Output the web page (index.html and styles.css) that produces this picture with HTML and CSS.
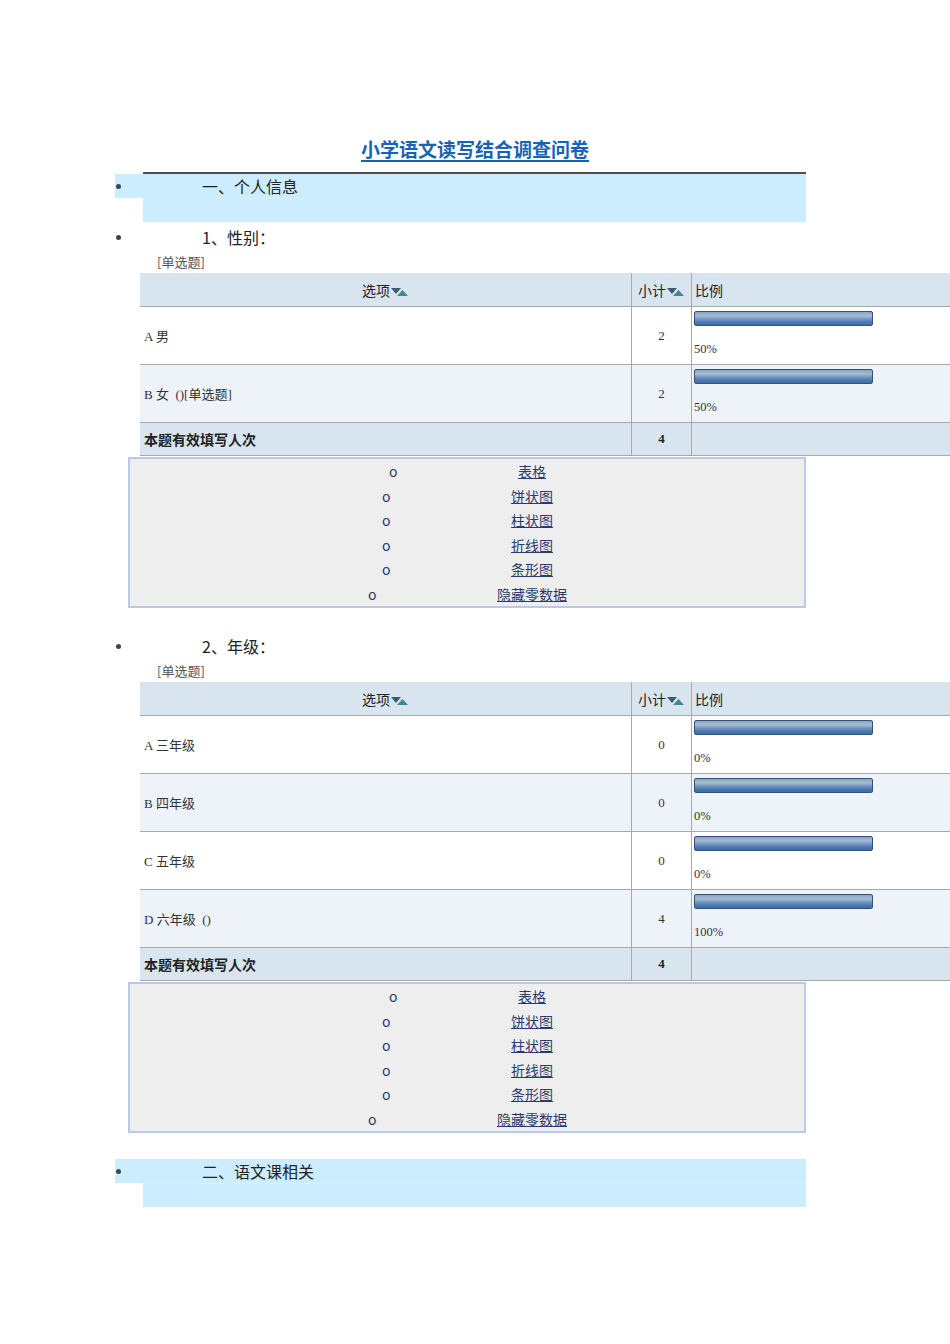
FILE: index.html
```html
<!DOCTYPE html>
<html lang="zh-CN">
<head>
<meta charset="utf-8">
<title>小学语文读写结合调查问卷</title>
<link rel="stylesheet" href="styles.css">
</head>
<body>
<div class="page">
  <h1 class="title"><a href="#">小学语文读写结合调查问卷</a></h1>
  <div class="rule"></div>
  <ul class="items">
    <li class="sec">
      <div class="sec-head"><span class="dot"></span><span class="sec-name">一、个人信息</span></div>
      <div class="sec-band"></div>
    </li>
    <li class="q">
      <div class="q-title"><span class="dot"></span><span class="q-name">1、性别：</span></div>
      <div class="q-type">[单选题]</div>
      <table class="stat">
        <colgroup><col class="w1"><col class="w2"><col class="w3"></colgroup>
        <thead>
          <tr>
            <th class="c1 hc">选项<svg class="sort" width="18" height="10" viewBox="0 0 18 10"><polygon points="0,1 10,1 5,7" fill="#3d5c6e"/><polygon points="6,9 17,9 11.5,3" fill="#3f8696"/></svg></th>
            <th class="c2 hc">小计<svg class="sort" width="18" height="10" viewBox="0 0 18 10"><polygon points="0,1 10,1 5,7" fill="#3d5c6e"/><polygon points="6,9 17,9 11.5,3" fill="#3f8696"/></svg></th>
            <th class="c3 hl">比例</th>
          </tr>
        </thead>
        <tbody>
          <tr>
            <td class="c1 opt">A 男</td>
            <td class="c2 cnt">2</td>
            <td class="c3 ratio"><div class="bar"></div><div class="pct">50%</div></td>
          </tr>
          <tr class="alt">
            <td class="c1 opt">B 女 &nbsp;()[单选题]</td>
            <td class="c2 cnt">2</td>
            <td class="c3 ratio"><div class="bar"></div><div class="pct">50%</div></td>
          </tr>
        </tbody>
        <tfoot>
          <tr>
            <td class="c1 ft-label">本题有效填写人次</td>
            <td class="c2 ft-num">4</td>
            <td class="c3"></td>
          </tr>
        </tfoot>
      </table>
      <ul class="charts">
        <li><span class="mk">o</span><a href="#">表格</a></li>
        <li><span class="mk">o</span><a href="#">饼状图</a></li>
        <li><span class="mk">o</span><a href="#">柱状图</a></li>
        <li><span class="mk">o</span><a href="#">折线图</a></li>
        <li><span class="mk">o</span><a href="#">条形图</a></li>
        <li><span class="mk">o</span><a href="#">隐藏零数据</a></li>
      </ul>
    </li>
    <li class="q">
      <div class="q-title"><span class="dot"></span><span class="q-name">2、年级：</span></div>
      <div class="q-type">[单选题]</div>
      <table class="stat">
        <colgroup><col class="w1"><col class="w2"><col class="w3"></colgroup>
        <thead>
          <tr>
            <th class="c1 hc">选项<svg class="sort" width="18" height="10" viewBox="0 0 18 10"><polygon points="0,1 10,1 5,7" fill="#3d5c6e"/><polygon points="6,9 17,9 11.5,3" fill="#3f8696"/></svg></th>
            <th class="c2 hc">小计<svg class="sort" width="18" height="10" viewBox="0 0 18 10"><polygon points="0,1 10,1 5,7" fill="#3d5c6e"/><polygon points="6,9 17,9 11.5,3" fill="#3f8696"/></svg></th>
            <th class="c3 hl">比例</th>
          </tr>
        </thead>
        <tbody>
          <tr>
            <td class="c1 opt">A 三年级</td>
            <td class="c2 cnt">0</td>
            <td class="c3 ratio"><div class="bar"></div><div class="pct">0%</div></td>
          </tr>
          <tr class="alt">
            <td class="c1 opt">B 四年级</td>
            <td class="c2 cnt">0</td>
            <td class="c3 ratio"><div class="bar"></div><div class="pct">0%</div></td>
          </tr>
          <tr>
            <td class="c1 opt">C 五年级</td>
            <td class="c2 cnt">0</td>
            <td class="c3 ratio"><div class="bar"></div><div class="pct">0%</div></td>
          </tr>
          <tr class="alt">
            <td class="c1 opt">D 六年级 &nbsp;()</td>
            <td class="c2 cnt">4</td>
            <td class="c3 ratio"><div class="bar"></div><div class="pct">100%</div></td>
          </tr>
        </tbody>
        <tfoot>
          <tr>
            <td class="c1 ft-label">本题有效填写人次</td>
            <td class="c2 ft-num">4</td>
            <td class="c3"></td>
          </tr>
        </tfoot>
      </table>
      <ul class="charts">
        <li><span class="mk">o</span><a href="#">表格</a></li>
        <li><span class="mk">o</span><a href="#">饼状图</a></li>
        <li><span class="mk">o</span><a href="#">柱状图</a></li>
        <li><span class="mk">o</span><a href="#">折线图</a></li>
        <li><span class="mk">o</span><a href="#">条形图</a></li>
        <li><span class="mk">o</span><a href="#">隐藏零数据</a></li>
      </ul>
    </li>
    <li class="sec">
      <div class="sec-head"><span class="dot"></span><span class="sec-name">二、语文课相关</span></div>
      <div class="sec-band"></div>
    </li>
  </ul>
</div>
</body>
</html>
```

FILE: styles.css
```css
* { box-sizing: border-box; }
html, body { margin: 0; padding: 0; background: #fff; overflow-x: hidden; }
body {
  width: 950px;
  font-family: "Noto Sans CJK SC", "Noto Sans", sans-serif;
  color: #222;
}
.page { padding: 135px 0 40px; }

.title {
  margin: 0;
  height: 28px;
  line-height: 28px;
  text-align: center;
  font-size: 19px;
  font-weight: 700;
}
.title a {
  color: #1763b3;
  text-decoration: underline;
  text-decoration-thickness: 2px;
  text-underline-offset: 3px;
}
.rule {
  margin: 9px 0 0 143px;
  width: 663px;
  height: 2px;
  background: #4d4f52;
}

.items { list-style: none; margin: 0; padding: 0; }

.dot {
  flex: none;
  width: 5px;
  height: 5px;
  margin-left: 1px;
  border-radius: 50%;
  background: #444;
}

.sec-head {
  margin-left: 115px;
  width: 691px;
  height: 24px;
  display: flex;
  align-items: center;
  background: #ccecff;
}
.sec-name { margin-left: 81px; font-size: 16px; color: #222; }
.sec-band {
  margin: 0 0 3px 143px;
  width: 663px;
  height: 24px;
  background: #ccecff;
  border-top: 1px solid #d8f1ff;
}

.q-title {
  margin-left: 115px;
  height: 24px;
  display: flex;
  align-items: center;
  font-size: 16px;
}
.q-name { margin-left: 81px; color: #222; }
.q-type {
  margin: 4px 0 0 157px;
  line-height: 18px;
  font-size: 13px;
  color: #555;
}

.stat {
  margin: 2px 0 0 140px;
  width: 810px;
  table-layout: fixed;
  border-collapse: separate;
  border-spacing: 0;
  font-family: "Liberation Serif", "Noto Sans CJK SC", serif;
  font-size: 13px;
  color: #333;
}
.stat .w1 { width: 492px; }
.stat .w2 { width: 60px; }
.stat .w3 { width: 258px; }
.stat th, .stat td {
  padding: 0;
  border-bottom: 1px solid #a8a8a8;
}
.stat .c1, .stat .c2 { border-right: 1px solid #a8a8a8; }

.stat thead th {
  height: 34px;
  background: #d9e5ee;
  font-family: "Noto Sans CJK SC", sans-serif;
  font-weight: 400;
  font-size: 14px;
  color: #222;
}
.stat .hc { text-align: center; white-space: nowrap; }
.stat .hl { text-align: left; padding-left: 3px; }
.sort { vertical-align: -1px; margin-left: 1px; }

.stat tbody td { height: 58px; background: #fff; }
.stat tbody tr.alt td { background: #eef3fa; }
.stat .opt { padding-left: 4px; }
.stat .cnt { text-align: center; }
.stat .ratio { vertical-align: top; padding: 4px 0 0 2px; }

.bar {
  width: 179px;
  height: 15px;
  border: 1px solid #2d5480;
  border-radius: 2px;
  background: linear-gradient(#8aa3c0 0%, #a7bdd4 30%, #7d9cc2 50%, #4f7db3 75%, #3f6da3 100%);
}
.pct { margin-top: 14px; line-height: 18px; font-size: 12.5px; color: #333; }

.stat tfoot td { height: 33px; background: #d9e5ee; }
.stat .ft-label {
  padding-left: 4px;
  font-family: "Noto Sans CJK SC", sans-serif;
  font-weight: 700;
  font-size: 14px;
  color: #222;
}
.stat .ft-num { text-align: center; font-weight: 700; color: #222; }

.charts {
  list-style: none;
  margin: 1px 0 26px 128px;
  padding: 0 0 0 130px;
  width: 678px;
  background: #eeeeee;
  border: 2px solid #b9c9e6;
}
.charts li {
  display: flex;
  justify-content: center;
  align-items: center;
  height: 24.5px;
  font-size: 14px;
}
.charts li::after { content: ""; flex: none; width: 129px; }
.mk { flex: none; width: 8px; margin-right: 121px; color: #2b3866; }
.charts a { color: #2b3a6b; text-decoration: underline; }
```
